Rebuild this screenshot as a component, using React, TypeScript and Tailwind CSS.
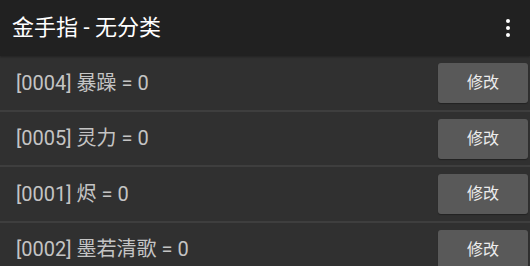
import React from "react";

type Cheat = { id: string; name: string; value: number };

const cheats: Cheat[] = [
  { id: "0004", name: "暴躁", value: 0 },
  { id: "0005", name: "灵力", value: 0 },
  { id: "0001", name: "烬", value: 0 },
  { id: "0002", name: "墨若清歌", value: 0 },
];

const font = { fontFamily: '"Roboto", "Noto Sans CJK SC", sans-serif' };

function MoreIcon() {
  return (
    <svg width="6" height="20" viewBox="0 0 6 20" className="text-white">
      <circle cx="3" cy="3" r="2" fill="currentColor" />
      <circle cx="3" cy="10" r="2" fill="currentColor" />
      <circle cx="3" cy="17" r="2" fill="currentColor" />
    </svg>
  );
}

export default function App() {
  return (
    <div className="w-[530px] h-[266px] overflow-hidden bg-[#303030] flex flex-col" style={font}>
      <header className="h-[56px] shrink-0 bg-[#212121] flex items-center justify-between pl-[12px] pr-[19px] shadow-[0_1px_2px_rgba(0,0,0,0.3)]">
        <h1 className="text-[22px] text-white leading-none">金手指 - 无分类</h1>
        <MoreIcon />
      </header>
      <ul className="flex flex-col">
        {cheats.map((c) => (
          <li
            key={c.id}
            className="h-[55.5px] shrink-0 flex items-center justify-between pl-[16px] pr-[2px] border-b-2 border-[#3e3e3e]"
          >
            <span className="text-[20px] leading-none text-[#c4c4c4]">
              [{c.id}] {c.name} = {c.value}
            </span>
            <button className="w-[90px] h-[40px] mt-[1px] bg-[#595959] rounded-[3px] text-[16px] text-[#ececec] shadow-[0_1px_1px_rgba(0,0,0,0.3)]">
              修改
            </button>
          </li>
        ))}
      </ul>
    </div>
  );
}
